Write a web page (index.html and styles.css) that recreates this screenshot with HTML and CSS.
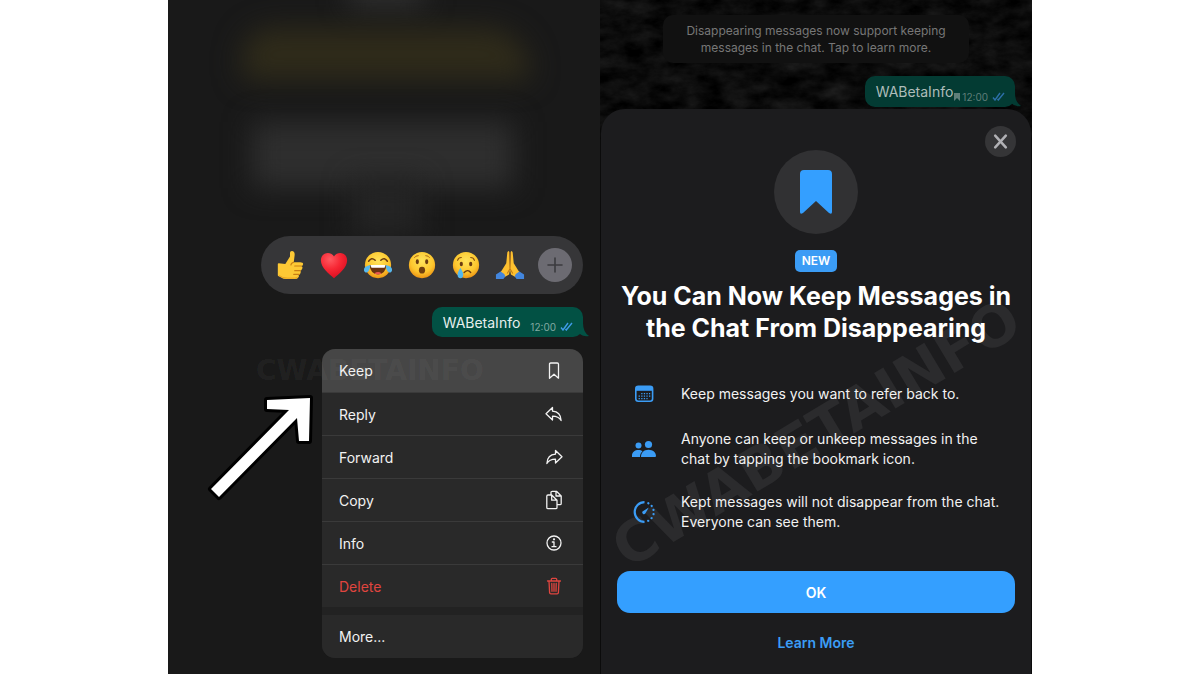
FILE: index.html
```
<!DOCTYPE html>
<html lang="en">
<head>
<meta charset="UTF-8">
<meta name="viewport" content="width=device-width, initial-scale=1.0">
<title>Keep Messages</title>
<link rel="stylesheet" href="styles.css">
</head>
<body>

<main class="stage">
    <section class="phone phone-menu">
        <div class="glow glow-top"></div>
        <div class="glow glow-yellow"></div>
        <div class="glow glow-grey"></div>
        <div class="glow glow-low"></div>

        <div class="reactions">
            <button class="reaction" aria-label="Thumbs up">
                <svg viewBox="0 0 32 32">
                    <path d="M3 15q0-1 1-1l7 1 5-8V3q0-2 2-2 3 0 3 4l-1 8h7q3 0 3 2 0 2-2 2 2 1 1 3t-2 2q1 1 0 3t-2 1q1 2 0 3-1 2-4 2H12q-3 0-6-2l-2-1q-1 0-1-1z" fill="#fdc935"/>
                    <path d="M20 13q-3 1-3 3m11 1h-7m6 5h-6m5 4h-6" fill="none" stroke="#c97f13" stroke-width="1.2" stroke-linecap="round"/>
                    <path d="M4 27q4 3 9 3h8q3 0 4-2" fill="none" stroke="#e9a01f" stroke-width="1"/>
                </svg>
            </button>
            <button class="reaction" aria-label="Heart">
                <svg viewBox="0 0 32 32">
                    <defs><radialGradient id="red" cx=".35" cy=".25" r=".8"><stop offset="0" stop-color="#ff5a61"/><stop offset=".5" stop-color="#f72734"/><stop offset="1" stop-color="#d80d20"/></radialGradient></defs>
                    <path d="M16 30C11 26 2 19 2 11c0-9 11-10 14-4 3-6 14-5 14 4 0 8-9 15-14 19z" fill="url(#red)"/>
                </svg>
            </button>
            <button class="reaction" aria-label="Tears of joy">
                <svg viewBox="0 0 32 32">
                    <defs><radialGradient id="face" cx=".5" cy=".35" r=".65"><stop offset="0" stop-color="#ffe45c"/><stop offset=".65" stop-color="#fdc72e"/><stop offset="1" stop-color="#ec9415"/></radialGradient></defs>
                    <circle cx="16" cy="16" r="14" fill="url(#face)"/>
                    <path d="M6 12q3-5 7-1M19 11q4-4 7 1" fill="none" stroke="#6b3c10" stroke-width="1.6" stroke-linecap="round"/>
                    <path d="M7 16h18q-1 10-9 10T7 16z" fill="#6b3410"/>
                    <path d="M8 16h16l-1 3H9z" fill="#fff"/>
                    <path d="M12 25q4-3 8 0-4 2-8 0z" fill="#e8584f"/>
                    <path d="M8 16q-1 7-4 8-3 0-3-3 0-4 7-5zM24 16q1 7 4 8 3 0 3-3 0-4-7-5z" fill="#57b8ee"/>
                </svg>
            </button>
            <button class="reaction" aria-label="Surprised">
                <svg viewBox="0 0 32 32">
                    <circle cx="16" cy="16" r="14" fill="url(#face)"/>
                    <ellipse cx="11" cy="12.5" rx="1.7" ry="2.6" fill="#6b3c10"/>
                    <ellipse cx="21" cy="12.5" rx="1.7" ry="2.6" fill="#6b3c10"/>
                    <path d="M8 8q1-2 4-2M20 6q3 0 4 2" fill="none" stroke="#a86213" stroke-width="1" stroke-linecap="round"/>
                    <ellipse cx="16" cy="21.5" rx="3.3" ry="3.6" fill="#70400f"/>
                </svg>
            </button>
            <button class="reaction" aria-label="Crying">
                <svg viewBox="0 0 32 32">
                    <circle cx="16" cy="16" r="14" fill="url(#face)"/>
                    <ellipse cx="11" cy="15" rx="1.7" ry="2.4" fill="#6b3c10"/>
                    <ellipse cx="21" cy="15" rx="1.7" ry="2.4" fill="#6b3c10"/>
                    <path d="M7 11q1-3 4-3M21 8q3 0 4 3" fill="none" stroke="#86500f" stroke-width="1.2" stroke-linecap="round"/>
                    <path d="M14 24q4-4 7 0" fill="none" stroke="#6b3c10" stroke-width="1.5" stroke-linecap="round"/>
                    <path d="M10 19q3 5 3 7 0 4-3 4t-3-4q0-2 3-7z" fill="#54b7ed"/>
                </svg>
            </button>
            <button class="reaction" aria-label="Folded hands">
                <svg viewBox="0 0 32 32">
                    <path d="M15 1q-2 0-2 3l-1 10-5 8q-2 3-3 3l4 5 7-4 1-5zM17 1q2 0 2 3l1 10 5 8q2 3 3 3l-4 5-7-4-1-5z" fill="#fdc02f"/>
                    <path d="M16 2v18l-3 5M16 20l3 5" fill="none" stroke="#c27a14" stroke-width="1.1"/>
                    <path d="M1 26l5-3q4 2 5 5l-2 3H1zM31 26l-5-3q-4 2-5 5l2 3h8z" fill="#4386dd"/>
                </svg>
            </button>
            <button class="reaction-more" aria-label="More reactions">
                <svg viewBox="0 0 34 34"><path d="M17 10v14M10 17h14" stroke="#3b3b3f" stroke-width="1.6" stroke-linecap="round"/></svg>
            </button>
        </div>

        <div class="bubble">
            <span class="bubble-text">WABetaInfo</span>
            <span class="bubble-time">12:00</span>
            <svg class="ticks" viewBox="0 0 13 9"><path d="M1 5.500L3 8 8 1M5.500 7l.8 1L12 1" fill="none" stroke="#3f9be8" stroke-width="1.4"/></svg>
            <svg class="tail" viewBox="0 0 10 14"><path d="M0 0h4q0 9 6 13-6 1-10-3z" fill="currentColor"/></svg>
        </div>

        <div class="menu">
            <button class="item active">Keep
                <svg viewBox="0 0 20 20"><path d="M5.500 3.200Q5.500 2 6.700 2h6.600q1.200 0 1.200 1.200v14L10 13.300l-4.500 3.900z"/></svg>
            </button>
            <button class="item">Reply
                <svg viewBox="0 0 20 20"><path d="M8.500 3.500v3.700c5 .3 8.300 3.400 8.600 9.300-2-3.400-4.600-4.300-8.600-4.300V16L2 9.800z"/></svg>
            </button>
            <button class="item">Forward
                <svg viewBox="0 0 20 20"><path d="M11.500 3.500v3.700c-5 .3-8.300 3.400-8.600 9.300 2-3.400 4.600-4.300 8.600-4.300V16L18 9.800z"/></svg>
            </button>
            <button class="item">Copy
                <svg viewBox="0 0 20 20"><path d="M7 5V2.500Q7 1.300 8.200 1.300h4.300l4.700 4.700v7.500q0 1.200-1.200 1.200h-3M12 1.500V6h5M2.800 6.300Q2.800 5 4 5h3.700l5.300 5.200v7.300q0 1.200-1.200 1.200H4q-1.200 0-1.200-1.200zM7.700 5v5.200H13"/></svg>
            </button>
            <button class="item">Info
                <svg viewBox="0 0 20 20"><circle cx="10" cy="10" r="7"/><path d="M8.300 9H10v4.700M8 13.700h4"/><circle cx="10" cy="6.300" r=".5"/></svg>
            </button>
            <button class="item delete">Delete
                <svg viewBox="0 0 20 20"><path d="M3.500 5h13M7.300 5V3.300q0-1 1-1h3.400q1 0 1 1V5M5 5l.6 11.600q.1 1.200 1.300 1.200h6.200q1.200 0 1.300-1.200L15 5M7.800 7.500l.2 7.800M10 7.500v7.800M12.200 7.500l-.2 7.800"/></svg>
            </button>
            <button class="item more">More...</button>
        </div>

        <div class="mark mark-small" aria-hidden="true">CWABETAINFO</div>
        <svg class="arrow" viewBox="0 0 110 110">
            <path d="M62 8l43-2-1 43h-10l-2-23-78 79-8-8 78-79-22-1z" fill="#fff" stroke="#000" stroke-width="6" stroke-linejoin="round" paint-order="stroke"/>
        </svg>
    </section>

    <section class="phone phone-sheet">
        <svg class="texture" aria-hidden="true">
            <filter id="leather" color-interpolation-filters="sRGB"><feTurbulence type="fractalNoise" baseFrequency=".04 .07" numOctaves="5" seed="8"/><feColorMatrix values=".16 0 0 0 -.035 .16 0 0 0 -.035 .16 0 0 0 -.035 0 0 0 0 1"/></filter>
            <rect width="100%" height="100%" filter="url(#leather)"/>
        </svg>
        <div class="chat">
            <p class="notice">Disappearing messages now support keeping messages in the chat. Tap to learn more.</p>
            <div class="bubble bubble-dim">
                <span class="bubble-text">WABetaInfo</span>
                <svg class="kept" viewBox="0 0 6 8"><path d="M0 0h6v8L3 5 0 8z" fill="currentColor"/></svg>
                <span class="bubble-time">12:00</span>
                <svg class="ticks" viewBox="0 0 13 9"><path d="M1 5.500L3 8 8 1M5.500 7l.8 1L12 1" fill="none" stroke="#2d6fa8" stroke-width="1.4"/></svg>
                <svg class="tail" viewBox="0 0 10 14"><path d="M0 0h4q0 9 6 13-6 1-10-3z" fill="currentColor"/></svg>
            </div>
        </div>

        <div class="sheet">
            <div class="mark mark-large" aria-hidden="true">CWABETAINFO</div>
            <button class="close" aria-label="Close">
                <svg viewBox="0 0 32 32"><path d="M10.500 10l11 12M21.500 10l-11 12" stroke="#b1b1b5" stroke-width="2.600" stroke-linecap="round"/></svg>
            </button>
            <div class="hero">
                <svg viewBox="0 0 84 84"><path d="M26 24q0-4 4-4h24q4 0 4 4v38q0 3-3 1L42 51 29 63q-3 2-3-1z" fill="#349fff"/></svg>
            </div>
            <span class="badge">NEW</span>
            <h1>You Can Now Keep Messages in the Chat From Disappearing</h1>
            <ul class="features">
                <li>
                    <svg viewBox="0 0 24 24">
                        <rect x="3.800" y="4.300" width="16.800" height="15" rx="2.500" fill="none" stroke="#3b9cf5" stroke-width="1.600"/>
                        <path d="M4 5h16.500v3.800H4z" fill="#3b9cf5"/>
                        <path d="M9.200 11.700h9M6.600 14.200h12M6.600 16.700h9" stroke="#3b9cf5" stroke-width="1.300" stroke-dasharray="1.300 1.300"/>
                    </svg>
                    <span>Keep messages you want to refer back to.</span>
                </li>
                <li>
                    <svg viewBox="0 0 24 24" fill="#3b9cf5">
                        <circle cx="6.500" cy="8.500" r="3"/><circle cx="16.500" cy="7.500" r="3.600"/>
                        <path d="M0 20v-1.500C0 15 3 13 6.500 13c1.600 0 3 .4 4 1.200C8.700 15.600 8 17.500 8 20zM9 20c0-4.500 3-7.300 7.500-7.300S24 15.500 24 19q0 1-1 1z"/>
                    </svg>
                    <span>Anyone can keep or unkeep messages in the chat by tapping the bookmark icon.</span>
                </li>
                <li>
                    <svg viewBox="0 0 24 24">
                        <path d="M12.500 2.200a9.800 9.800 0 0 0 0 19.600" fill="none" stroke="#3b9cf5" stroke-width="2.200"/>
                        <path d="M16.300 3.200a9.800 9.800 0 0 1-1 18" fill="none" stroke="#3b9cf5" stroke-width="2.200" stroke-linecap="round" stroke-dasharray=".1 4.200"/>
                        <path d="M16.800 7.600L13.300 13.500a1.700 1.700 0 1 1-2.500-2.300z" fill="#3b9cf5"/>
                    </svg>
                    <span>Kept messages will not disappear from the chat. Everyone can see them.</span>
                </li>
            </ul>
            <button class="ok">OK</button>
            <a class="learn" href="#">Learn More</a>
        </div>
    </section>
</main>

</body>
</html>
```
FILE: styles.css
```
* {
    box-sizing: border-box;
}
body {
    font-family: Inter, "Liberation Sans", sans-serif;
    margin: 0;
    background: #fff;
    color: #f2f2f2;
}
button {
    font-family: inherit;
    border: none;
    padding: 0;
    color: inherit;
    cursor: pointer;
}
svg {
    display: block;
}
.stage {
    width: 72%;
    min-height: calc(100vh - 1px);
    margin: 0 auto;
    display: grid;
    grid-template-columns: 1fr 1fr;
}
.phone {
    position: relative;
    overflow: hidden;
    display: flex;
    flex-direction: column;
}

/* left: message menu */
.phone-menu {
    background: #191919;
    align-items: flex-end;
    justify-content: flex-end;
    padding: 16px 17px;
}
.glow {
    position: absolute;
    filter: blur(14px);
}
.glow-top {
    top: -20px;
    left: 180px;
    width: 76px;
    height: 28px;
    background: #303030;
}
.glow-yellow {
    top: 28px;
    left: 74px;
    width: 288px;
    height: 52px;
    background: #2f2b1a;
    border-radius: 40px 60px 10px 10px;
}
.glow-grey {
    top: 122px;
    left: 84px;
    width: 262px;
    height: 66px;
    background: #2e2e2e;
}
.glow-low {
    top: 180px;
    left: 184px;
    width: 70px;
    height: 56px;
    background: #242424;
}
.reactions {
    position: relative;
    display: flex;
    align-items: center;
    gap: 12px;
    height: 58px;
    padding: 0 11px 0 13px;
    border-radius: 29px;
    background: #363638;
}
.reaction {
    width: 32px;
    background: none;
}
.reaction svg {
    width: 30px;
    height: 30px;
    margin: 0 auto;
}
.reaction-more {
    width: 34px;
    height: 34px;
    border-radius: 50%;
    background: #6c6b72;
}
.bubble {
    position: relative;
    display: flex;
    align-items: center;
    height: 30px;
    margin: 13px 0 12px;
    padding: 0 10px 0 11px;
    border-radius: 10px;
    background: #025144;
    color: #025144;
}
.bubble-text {
    font-size: 14px;
    color: #e6efed;
}
.bubble-time {
    font-size: 10px;
    margin: 10px 4px 0 10px;
    color: #82a9a2;
}
.ticks {
    width: 13px;
    height: 9px;
    margin-top: 9px;
}
.tail {
    position: absolute;
    right: -6px;
    bottom: 0;
    width: 10px;
    height: 14px;
}
.menu {
    width: 261px;
    border-radius: 13px;
    overflow: hidden;
    background: #222;
}
.item {
    display: flex;
    align-items: center;
    justify-content: space-between;
    width: 100%;
    height: 43px;
    padding: 0 19px 0 17px;
    font-size: 14px;
    background: #292929;
}
.item + .item {
    border-top: 1px solid #3a3a3a;
}
.item svg {
    width: 20px;
    height: 20px;
    fill: none;
    stroke: currentColor;
    stroke-width: 1.3;
    stroke-linejoin: round;
    stroke-linecap: round;
}
.active {
    background: #464646;
}
.delete {
    color: #e0453f;
}
.item.more {
    margin-top: 8px;
    border-top: none;
}
.mark {
    position: absolute;
    font-family: "DejaVu Sans", sans-serif;
    font-weight: bold;
    white-space: nowrap;
    pointer-events: none;
}
.mark-small {
    top: 354px;
    left: 88px;
    font-size: 28px;
    color: rgba(255, 255, 255, 0.05);
}
.arrow {
    position: absolute;
    top: 392px;
    left: 37px;
    width: 110px;
    height: 110px;
}

/* right: bottom sheet */
.phone-sheet {
    background: #0b0b0b;
    padding: 0 1px;
}
.texture {
    position: absolute;
    top: 0;
    left: 0;
    width: 100%;
    height: 140px;
}
.chat {
    position: relative;
    display: flex;
    flex-direction: column;
    align-items: flex-end;
    padding: 15px 16px 2px;
}
.notice {
    align-self: center;
    width: 306px;
    margin: 0;
    padding: 7px 16px;
    border-radius: 10px;
    background: #111;
    color: #777;
    font-size: 12px;
    line-height: 17px;
    text-align: center;
}
.bubble-dim {
    height: 31px;
    margin: 13px 0 0;
    background: #033b33;
    color: #033b33;
}
.bubble-dim .bubble-text {
    color: #aebdba;
}
.bubble-dim .bubble-time {
    margin-left: 2px;
    color: #5f7e79;
}
.kept {
    width: 6px;
    height: 8px;
    margin: 10px 0 0 1px;
    color: #5f7e79;
}
.sheet {
    position: relative;
    flex: 1;
    display: flex;
    flex-direction: column;
    align-items: center;
    padding: 41px 16px 21px;
    border-radius: 24px 24px 0 0;
    background: #1c1c1e;
}
.mark-large {
    top: 292px;
    left: 50%;
    font-size: 57px;
    line-height: 64px;
    color: #2b2b2d;
    transform: translateX(-50%) rotate(-31deg);
}
.close {
    position: absolute;
    top: 17px;
    right: 15px;
    width: 31px;
    height: 31px;
    border-radius: 50%;
    background: #353537;
}
.hero {
    width: 84px;
    height: 84px;
    border-radius: 50%;
    background: #313133;
}
.badge {
    margin-top: 16px;
    padding: 0 7px;
    border-radius: 5px;
    background: #3b9cf5;
    color: #fff;
    font-size: 12px;
    font-weight: 600;
    line-height: 22px;
}
h1 {
    position: relative;
    margin: 8px 0 38px;
    font-size: 25px;
    line-height: 32px;
    text-align: center;
    color: #fff;
}
.features {
    position: relative;
    align-self: stretch;
    display: flex;
    flex-direction: column;
    gap: 23px;
    margin: 0;
    padding: 0 8px 0 15px;
    list-style: none;
    font-size: 14px;
    line-height: 20px;
}
.features li {
    display: flex;
    align-items: center;
    gap: 25px;
}
.features svg {
    flex: none;
    width: 24px;
    height: 24px;
}
.ok {
    position: relative;
    width: 100%;
    height: 42px;
    margin-top: auto;
    border-radius: 13px;
    background: #349fff;
    color: #fff;
    font-size: 14px;
    font-weight: 600;
}
.learn {
    margin-top: 20px;
    color: #3b9cf5;
    font-size: 14px;
    font-weight: 600;
    line-height: 20px;
    text-decoration: none;
}
```
